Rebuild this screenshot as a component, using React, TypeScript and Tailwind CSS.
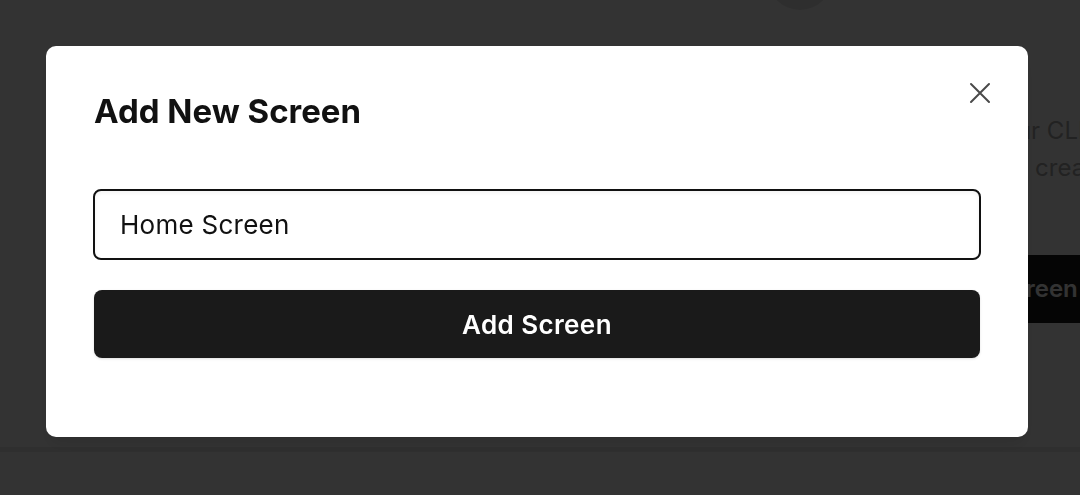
import { useState } from "react";

const CloseIcon = () => (
  <svg width="22" height="22" viewBox="0 0 22 22" fill="none" stroke="#4a4a4a" strokeWidth="2" strokeLinecap="round">
    <path d="M2 2 20 20M20 2 2 20" />
  </svg>
);

const BackgroundPage = () => {
  return (
    <div className="min-h-screen bg-white flex flex-col">
      <div className="flex-1 flex flex-col">
        <div className="ml-[768px] -mt-[54px] w-[64px] h-[64px] rounded-full bg-[#e6e6e6]" />
        <div className="ml-[936px] mt-[102px] text-[24px] leading-[37px] text-[#aaaaaa] whitespace-nowrap">
          <p>Link your CLI to get started</p>
          <p className="-ml-[7px]">and then create screens</p>
        </div>
        <div className="ml-[900px] mt-[69px] h-[68px] w-[400px] rounded-lg bg-[#1a1a1a] text-white text-[24px] font-semibold flex items-center pl-[43px] whitespace-nowrap">
          Add Screen
        </div>
      </div>
      <div className="h-[48px] border-t-[5px] border-[#e8e8e8] bg-white" />
    </div>
  );
};

export default function App() {
  const [name, setName] = useState("Home Screen");

  return (
    <div className="relative min-h-screen overflow-hidden" style={{ fontFamily: "Inter, 'Noto Sans', sans-serif" }}>
      <BackgroundPage />
      <div className="fixed inset-0 bg-black/80">
        <div className="relative ml-[46px] mt-[46px] w-[982px] h-[391px] rounded-[10px] bg-white shadow-lg px-[48px] pt-[45px]">
          <button className="absolute top-[36px] right-[37px]" aria-label="Close">
            <CloseIcon />
          </button>
          <h2 className="text-[33px] leading-[40px] font-bold text-[#111111]">
            Add New Screen
          </h2>
          <input
            value={name}
            onChange={(e) => setName(e.target.value)}
            className="mt-[58px] w-[888px] -ml-[1px] h-[71px] rounded-lg border-2 border-[#111111] px-[25px] text-[26px] tracking-[0.01em] text-[#111111] outline-none shadow-inner"
          />
          <button className="mt-[30px] w-full h-[68px] rounded-lg bg-[#1a1a1a] text-white text-[26px] tracking-[0.015em] font-semibold shadow-sm">
            Add Screen
          </button>
        </div>
      </div>
    </div>
  );
}
